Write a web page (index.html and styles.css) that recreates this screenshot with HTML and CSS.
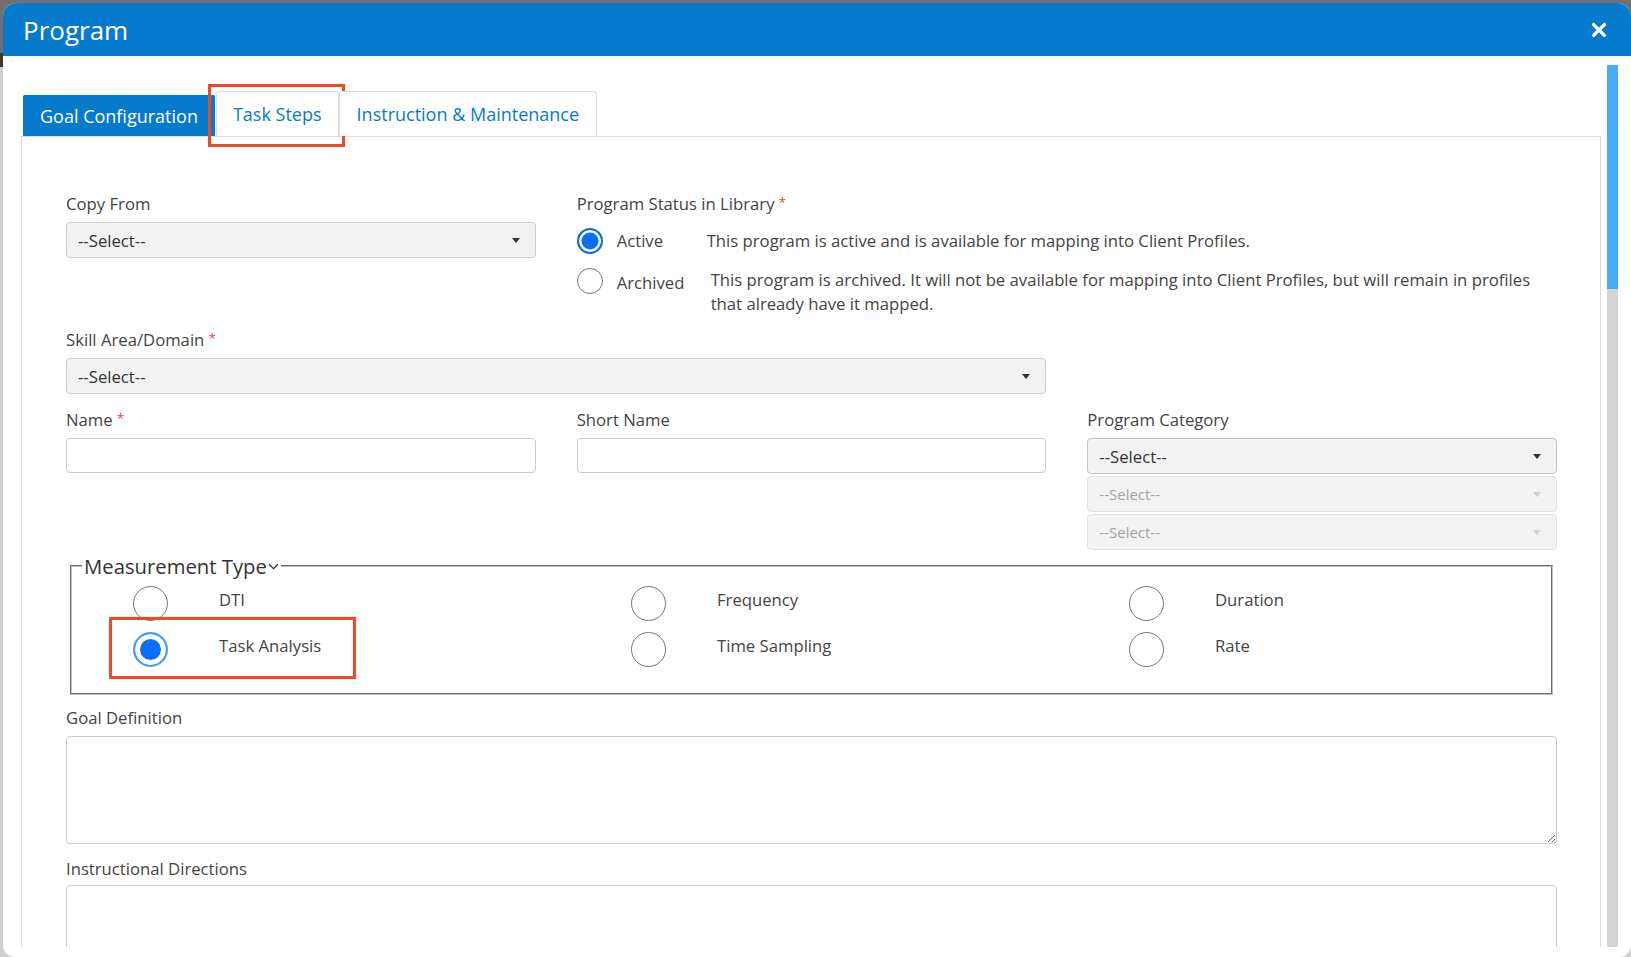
FILE: index.html
```html
<!DOCTYPE html>
<html lang="en">
<head>
<meta charset="utf-8">
<title>Program</title>
<link rel="stylesheet" href="styles.css">
</head>
<body>
<div class="modal">
  <header class="modal-header">
    <h1 class="modal-title">Program</h1>
    <button class="close" type="button" aria-label="Close">
      <svg viewBox="0 0 16 16" width="16" height="16"><path d="M2.6 2.6 L13.4 13.4 M13.4 2.6 L2.6 13.4" stroke="#fff" stroke-width="3.4" stroke-linecap="round"/></svg>
    </button>
  </header>
  <div class="modal-body">
    <div class="scroll-content">
      <ul class="tabs">
        <li class="tab active">Goal Configuration</li>
        <li class="tab marked">Task Steps</li>
        <li class="tab">Instruction &amp; Maintenance</li>
      </ul>
      <div class="panel">
        <div class="row">
          <div class="field">
            <div class="label">Copy From</div>
            <div class="select"><span>--Select--</span><svg class="caret" viewBox="0 0 8 5"><path d="M0 0 H8 L4 5 Z"/></svg></div>
          </div>
          <div class="field span-2">
            <div class="label status-label">Program Status in Library <span class="req">*</span></div>
            <div class="status-opt">
              <span class="radio checked"></span>
              <span class="opt-label">Active</span>
              <span class="opt-desc">This program is active and is available for mapping into Client Profiles.</span>
            </div>
            <div class="status-opt top">
              <span class="radio"></span>
              <span class="opt-label">Archived</span>
              <span class="opt-desc shift">This program is archived. It will not be available for mapping into Client Profiles, but will remain in profiles<br>that already have it mapped.</span>
            </div>
          </div>
        </div>

        <div class="row row-2">
          <div class="field span-2">
            <div class="label">Skill Area/Domain <span class="req">*</span></div>
            <div class="select"><span>--Select--</span><svg class="caret" viewBox="0 0 8 5"><path d="M0 0 H8 L4 5 Z"/></svg></div>
          </div>
        </div>

        <div class="row row-3">
          <div class="field">
            <div class="label">Name <span class="req">*</span></div>
            <div class="input"></div>
          </div>
          <div class="field">
            <div class="label">Short Name</div>
            <div class="input"></div>
          </div>
          <div class="field">
            <div class="label">Program Category</div>
            <div class="select strong"><span>--Select--</span><svg class="caret" viewBox="0 0 8 5"><path d="M0 0 H8 L4 5 Z"/></svg></div>
            <div class="select disabled"><span>--Select--</span><svg class="caret" viewBox="0 0 8 5"><path d="M0 0 H8 L4 5 Z"/></svg></div>
            <div class="select disabled"><span>--Select--</span><svg class="caret" viewBox="0 0 8 5"><path d="M0 0 H8 L4 5 Z"/></svg></div>
          </div>
        </div>

        <fieldset class="measure">
          <legend class="measure-legend">Measurement Type<svg class="chev" viewBox="0 0 11 7" width="11" height="7"><path d="M1 1.2 L5.5 5.6 L10 1.2" fill="none" stroke="#333" stroke-width="1.3"/></svg></legend>
          <div class="measure-grid">
            <div class="m-opt"><span class="radio lg"></span><span class="m-label">DTI</span></div>
            <div class="m-opt"><span class="radio lg"></span><span class="m-label">Frequency</span></div>
            <div class="m-opt"><span class="radio lg"></span><span class="m-label">Duration</span></div>
            <div class="m-opt marked"><span class="radio lg checked"></span><span class="m-label">Task Analysis</span></div>
            <div class="m-opt"><span class="radio lg"></span><span class="m-label">Time Sampling</span></div>
            <div class="m-opt"><span class="radio lg"></span><span class="m-label">Rate</span></div>
          </div>
        </fieldset>

        <div class="label goal-label">Goal Definition</div>
        <textarea class="textarea"></textarea>

        <div class="label instr-label">Instructional Directions</div>
        <textarea class="textarea big"></textarea>
      </div>
    </div>
    <div class="scrollbar"><div class="thumb"></div><div class="track"></div></div>
  </div>
</div>
</body>
</html>
```

FILE: styles.css
```css
html, body {
  margin: 0;
  height: 957px;
  overflow: hidden;
}
body {
  background: linear-gradient(to bottom, #707070 0, #707070 53px, #3a3a3a 53px, #3a3a3a 67px, #d0d0d0 67px, #d0d0d0 100%);
  font-family: "Open Sans", "Noto Sans", sans-serif;
  color: #444;
}
.modal {
  margin: 3px 0 0 3px;
  width: 1628px;
  height: 954px;
  background: #fff;
  border-radius: 14px 14px 12px 12px;
  overflow: hidden;
  display: flex;
  flex-direction: column;
}
.modal-header {
  flex: none;
  box-sizing: border-box;
  height: 53px;
  background: #067bcd;
  display: flex;
  align-items: center;
  justify-content: space-between;
  padding: 0 24px 0 20px;
}
.modal-title {
  margin: 0;
  font-size: 26px;
  font-weight: 400;
  line-height: 1;
  color: #fff;
}
.close {
  border: none;
  background: none;
  padding: 0;
  width: 16px;
  height: 16px;
  display: flex;
}
.modal-body {
  flex: 1;
  min-height: 0;
  display: flex;
  gap: 6px;
  padding: 9px 13px 10px 18px;
}
.scroll-content {
  flex: 1;
  min-width: 0;
  overflow: hidden;
  padding-top: 25px;
  display: flex;
  flex-direction: column;
}
.tabs {
  list-style: none;
  margin: 0;
  padding: 0 0 0 2px;
  display: flex;
  align-items: flex-end;
  height: 46px;
  flex: none;
}
.tab {
  box-sizing: border-box;
  position: relative;
  height: 45px;
  padding: 0 17px;
  display: flex;
  align-items: center;
  font-size: 18px;
  color: #067bcd;
  background: #fff;
  border: 1px solid #ddd;
  border-bottom: none;
  border-radius: 4px 4px 0 0;
}
.tab.active {
  height: 41px;
  background: #067bcd;
  border-color: #067bcd;
  color: #fff;
  padding: 0 16px;
  border-radius: 2px 2px 0 0;
  margin-right: 1px;
}
.tab.marked {
  padding: 0 16px;
}
.tab.marked::after {
  content: "";
  position: absolute;
  left: -9px;
  top: -8px;
  width: 137px;
  height: 63px;
  border: 3px solid #ee4a26;
  box-sizing: border-box;
}
.panel {
  flex: 1;
  border: 1px solid #ddd;
  border-bottom: none;
  padding: 56px 43px 0 44px;
}
.row {
  display: grid;
  grid-template-columns: repeat(3, 1fr);
  column-gap: 41px;
}
.row-2 { margin-top: 13px; }
.row-3 { margin-top: 15px; }
.span-2 { grid-column: span 2; }
.label {
  display: block;
  font-size: 16.7px;
  line-height: 22px;
  height: 22px;
  color: #444;
  margin-bottom: 7px;
}
.req {
  position: relative;
  top: -3px;
  color: #e8403a;
  font-size: 13px;
  line-height: 0;
}
.select {
  box-sizing: border-box;
  height: 36px;
  border: 1px solid #cdcdcd;
  border-radius: 4px;
  background: #f2f2f2;
  display: flex;
  align-items: center;
  justify-content: space-between;
  padding: 0 15px 0 11px;
  font-size: 16.7px;
  color: #333;
}
.select.strong { border-color: #c4c4c4; }
.select.disabled {
  margin-top: 2px;
  background: #f3f3f3;
  border-color: #e3e3e3;
  color: #a3a3a3;
  font-size: 15px;
}
.caret {
  width: 8px;
  height: 5px;
  fill: #333;
}
.select.disabled .caret { fill: #cfcfcf; }
.input {
  box-sizing: border-box;
  height: 35px;
  border: 1px solid #cdcdcd;
  border-radius: 4px;
  background: #fff;
}
.status-label { margin-bottom: 13px; }
.status-opt {
  display: grid;
  grid-template-columns: 40px 90px 1fr;
  align-items: center;
  font-size: 16.7px;
  line-height: 24px;
  color: #444;
}
.status-opt.top {
  margin-top: 14px;
  align-items: start;
}
.status-opt.top .opt-label { margin-top: 3px; }
.opt-desc { white-space: nowrap; }
.opt-desc.shift { padding-left: 4px; }
.radio {
  box-sizing: border-box;
  display: inline-block;
  width: 26px;
  height: 26px;
  border-radius: 50%;
  border: 1.5px solid #767676;
  background: #fff;
}
.radio.checked {
  border: 2px solid #0b6ef6;
  background: #0b6ef6;
  box-shadow: inset 0 0 0 2.5px #fff;
}
.measure {
  margin: 2px 4px 0;
  border: 2px groove #c0c0c0;
  padding: 0 10px 26px;
  min-width: 0;
}
.measure-legend {
  font-size: 20.3px;
  line-height: 28px;
  color: #333;
  padding: 0 2px;
}
.chev {
  margin-left: 1px;
  vertical-align: 4px;
}
.measure-grid {
  display: grid;
  grid-template-columns: 498px 498px 1fr;
  row-gap: 11px;
  margin: 6px 0 0 51px;
}
.m-opt {
  position: relative;
  display: flex;
  align-items: center;
  height: 35px;
}
.radio.lg {
  width: 35px;
  height: 35px;
  flex: none;
}
.radio.lg.checked {
  border: 2px solid #4b98ff;
  background: #0b6ef6;
  box-shadow: inset 0 0 0 5px #fff;
}
.m-label {
  margin-left: 51px;
  margin-top: -8px;
  font-size: 16.7px;
  line-height: 24px;
  color: #444;
}
.m-opt.marked::after {
  content: "";
  position: absolute;
  left: -24px;
  top: -15px;
  width: 247px;
  height: 62px;
  border: 3px solid #ee4a26;
  box-sizing: border-box;
}
.goal-label { margin-top: 12px; }
.instr-label { margin-top: 14px; margin-bottom: 5px; }
.textarea {
  display: block;
  box-sizing: border-box;
  width: 100%;
  height: 108px;
  margin: 0;
  border: 1px solid #cdcdcd;
  border-radius: 4px;
  background: #fff;
  font-family: inherit;
}
.textarea.big { height: 220px; }
.scrollbar {
  flex: none;
  width: 11px;
  display: flex;
  flex-direction: column;
}
.thumb {
  height: 224px;
  background: #45aef5;
}
.track {
  flex: 1;
  background: #d4d4d4;
}
```
